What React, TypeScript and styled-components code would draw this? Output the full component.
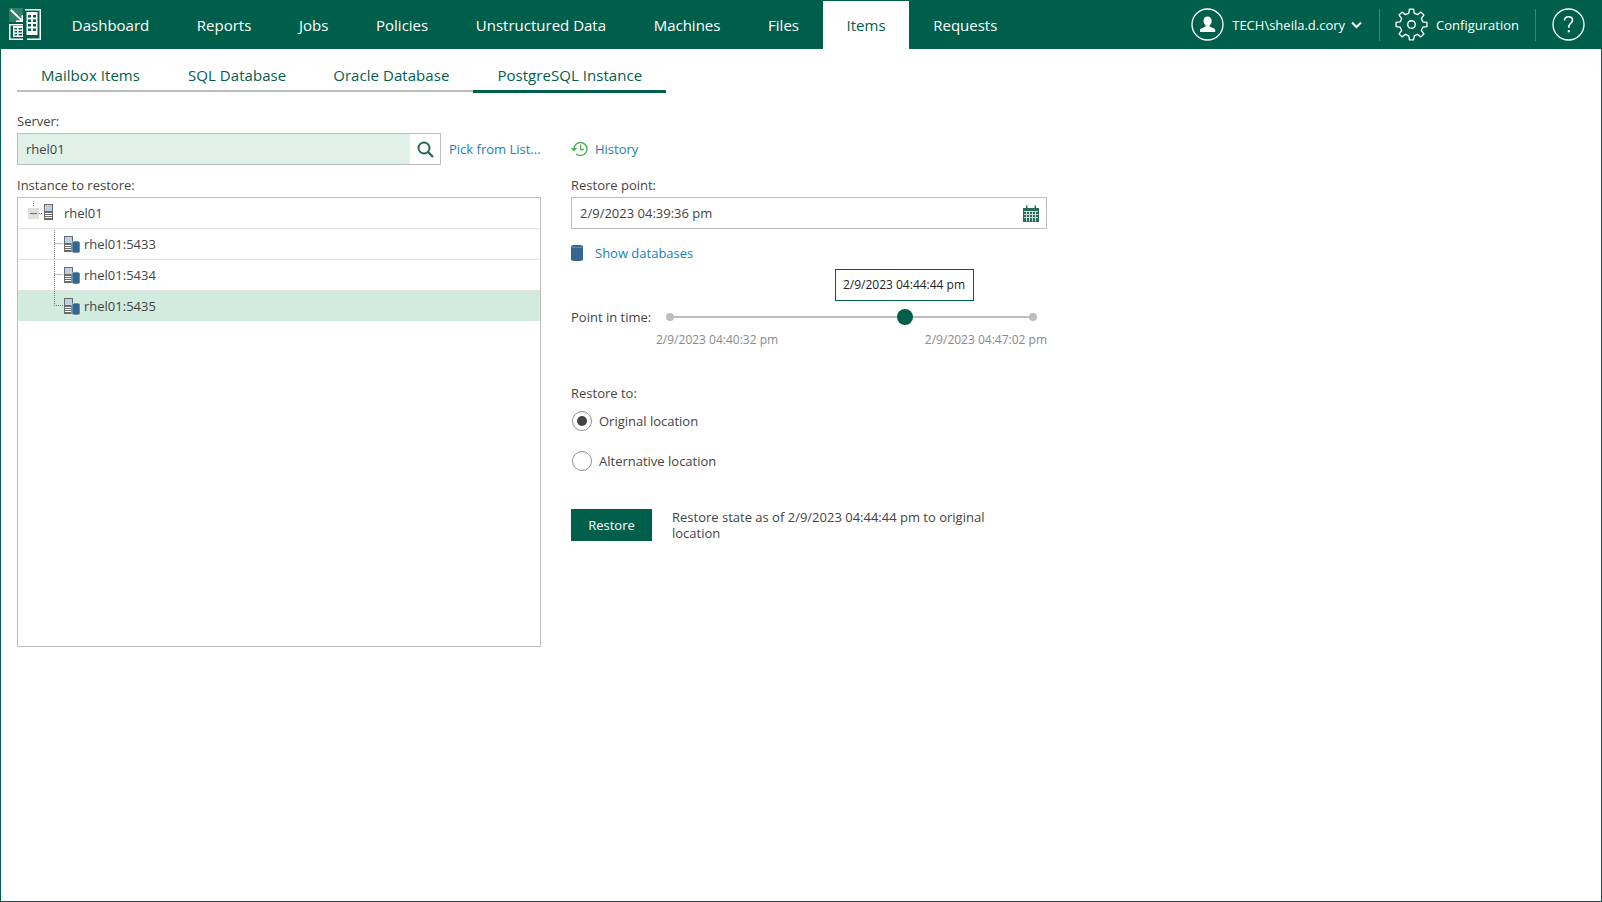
import React from "react";
import styled, { createGlobalStyle } from "styled-components";

const GREEN = "#005f4b";

const Global = createGlobalStyle`
  html, body { margin: 0; padding: 0; height: 100%; background: #fff; }
  body { font-family: "Open Sans", "Liberation Sans", sans-serif; font-size: 13px; color: #444; }
  #root { height: 100%; }
`;

const Page = styled.div`
  box-sizing: border-box;
  width: 1602px;
  height: 902px;
  border: 1px solid ${GREEN};
  border-top: 0;
  overflow: hidden;
`;
const Header = styled.header`
  height: 49px;
  margin: 0 -1px;
  background: ${GREEN};
  display: flex;
  align-items: stretch;
`;
const Logo = styled.div`
  width: 48px;
  display: flex;
  align-items: center;
  padding-left: 9px;
  box-sizing: border-box;
`;
const NavItem = styled.div<{ $active?: boolean }>`
  padding: 0 23.82px;
  display: flex;
  align-items: center;
  font-size: 15px;
  margin-top: ${(p) => (p.$active ? "1px" : "0")};
  padding-bottom: ${(p) => (p.$active ? "1px" : "0")};
  color: ${(p) => (p.$active ? GREEN : "#fff")};
  background: ${(p) => (p.$active ? "#fff" : "transparent")};
`;
const HeaderRight = styled.div`
  margin-left: auto;
  display: flex;
  align-items: center;
  color: #fff;
  padding-right: 17px;
`;
const Divider = styled.div`
  width: 1px;
  height: 32px;
  background: #3d8574;
`;
const UserBlock = styled.div`
  display: flex;
  align-items: center;
  gap: 8px;
  padding-right: 17px;
  font-size: 13px;
`;
const HeaderText = styled.span`
  padding-top: 1px;
`;
const UserChevron = styled.span`
  display: flex;
  margin-left: -2px;
`;
const ConfigBlock = styled.div`
  display: flex;
  align-items: center;
  gap: 8px;
  padding: 0 16px 0 15px;
  font-size: 13px;
`;
const HelpBlock = styled.div`
  padding-left: 16px;
  display: flex;
`;
const Tabs = styled.div`
  display: flex;
  margin: 0 0 0 16px;
  height: 43px;
  align-items: stretch;
`;
const Tab = styled.div<{ $active?: boolean; $flush?: boolean }>`
  box-sizing: border-box;
  padding: 10px 23.5px 0 24px;
  height: ${(p) => (p.$active ? "44px" : "43px")};
  display: flex;
  align-items: center;
  font-size: 15px;
  letter-spacing: 0.05px;
  color: ${GREEN};
  border-bottom: ${(p) => (p.$active ? `3px solid ${GREEN}` : "2px solid #bdbdbd")};
  margin-right: ${(p) => (p.$flush ? "-0.5px" : "0.5px")};
`;
const Content = styled.main`
  display: flex;
  padding: 20px 0 0 16px;
  gap: 30px;
`;
const LeftCol = styled.section`
  width: 524px;
`;
const RightCol = styled.section`
  width: 476px;
`;
const Label = styled.div`
  font-size: 13px;
  line-height: 18px;
  color: #444;
`;
const ServerRow = styled.div`
  display: flex;
  align-items: center;
  margin-top: 3px;
  height: 32px;
`;
const ServerInput = styled.div`
  box-sizing: border-box;
  width: 424px;
  height: 32px;
  border: 1px solid #bdbdbd;
  display: flex;
`;
const ServerValue = styled.div`
  flex: 1;
  background: #dff1e8;
  padding-left: 8px;
  line-height: 30px;
`;
const SearchAddon = styled.div`
  width: 30px;
  display: flex;
  align-items: center;
  justify-content: center;
`;
const Link = styled.span`
  color: #1a7fb5;
  font-size: 13px;
`;
const PickLink = styled(Link)`
  margin-left: 8px;
`;
const SpacedLabel = styled(Label)`
  margin-top: 11px;
  margin-bottom: 3px;
`;
const TreeBox = styled.div`
  box-sizing: border-box;
  height: 450px;
  border: 1px solid #bdbdbd;
`;
const TreeRow = styled.div<{ $selected?: boolean; $root?: boolean }>`
  height: ${(p) => (p.$selected ? "30px" : "31px")};
  box-sizing: border-box;
  display: flex;
  align-items: center;
  padding-left: ${(p) => (p.$root ? "10px" : "36px")};
  background: ${(p) => (p.$selected ? "#d1ebdf" : "#fff")};
  border-bottom: ${(p) => (p.$selected ? "0" : "1px solid #e2e2e2")};
`;
const RootName = styled.span`
  margin-left: 0;
`;
const ChildName = styled.span`
  margin-left: 0px;
`;
const HistoryRow = styled.div`
  height: 32px;
  margin-top: 21px;
  display: flex;
  align-items: center;
  gap: 7px;
`;
const DateInput = styled.div`
  box-sizing: border-box;
  height: 32px;
  margin-top: 3px;
  border: 1px solid #bdbdbd;
  display: flex;
  align-items: center;
  justify-content: space-between;
  padding: 0 7px 0 8px;
`;
const ShowDb = styled.div`
  display: flex;
  align-items: center;
  gap: 12px;
  height: 20px;
  margin-top: 14px;
`;
const SliderArea = styled.div`
  position: relative;
  margin-top: 45px;
  height: 32px;
`;
const SliderRow = styled.div`
  display: flex;
  align-items: center;
  height: 18px;
`;
const SliderLabel = styled.div`
  width: 99px;
`;
const Track = styled.div`
  position: relative;
  width: 363px;
  height: 2px;
  background: #bdbdbd;
`;
const Dot = styled.div<{ $side: "left" | "right" }>`
  position: absolute;
  top: -3px;
  ${(p) => p.$side}: -4px;
  width: 8px;
  height: 8px;
  border-radius: 50%;
  background: #bdbdbd;
`;
const Thumb = styled.div`
  position: absolute;
  top: -7px;
  left: 227px;
  width: 16px;
  height: 16px;
  border-radius: 50%;
  background: ${GREEN};
`;
const Tooltip = styled.div`
  position: absolute;
  left: 264px;
  top: -39px;
  box-sizing: border-box;
  width: 139px;
  height: 32px;
  border: 1px solid ${GREEN};
  background: #fff;
  color: #222;
  font-size: 12px;
  padding: 0 1px 1px 0;
  display: flex;
  align-items: center;
  justify-content: center;
`;
const RangeLabels = styled.div`
  display: flex;
  justify-content: space-between;
  padding-left: 85px;
  margin-top: 5px;
  font-size: 12px;
  line-height: 18px;
  color: #8a8a8a;
`;
const RestoreToLabel = styled(Label)`
  margin-top: 44px;
`;
const RadioRow = styled.div`
  display: flex;
  align-items: center;
  gap: 7px;
  height: 22px;
  margin-bottom: 18px;
  padding-left: 1px;
`;
const RadioList = styled.div`
  margin-top: 8px;
`;
const Radio = styled.div<{ $checked?: boolean }>`
  box-sizing: border-box;
  width: 20px;
  height: 20px;
  border-radius: 50%;
  border: 1px solid #8f8f8f;
  display: flex;
  align-items: center;
  justify-content: center;
  &::after {
    content: "";
    display: ${(p) => (p.$checked ? "block" : "none")};
    width: 10px;
    height: 10px;
    border-radius: 50%;
    background: #444;
  }
`;
const ActionRow = styled.div`
  display: flex;
  align-items: center;
  margin-top: 37px;
`;
const RestoreButton = styled.button`
  width: 81px;
  height: 32px;
  border: 0;
  padding: 0;
  background: ${GREEN};
  color: #fff;
  font: 13px "Open Sans", "Liberation Sans", sans-serif;
`;
const ActionText = styled.div`
  margin-left: 20px;
  width: 330px;
  line-height: 16px;
`;

const LogoIcon = () => (
  <svg width="33" height="33" viewBox="0 0 33 33">
    <path d="M0 0h14v14H0z" fill="#2f7f6c" />
    <path d="M1 2.500 2.500 1 12.500 11V7H14v7H7v-1.500h4.500L1 2.500z" fill="#fff" />
    <path d="M16 1h16v31H18v-1.500h12.500V2.500H16z" fill="#fff" />
    <path d="M17.500 4h11v23h-11z" fill="#fff" />
    <path d="M19 7h3v2.500h-3zM24 7h3v2.500h-3zM19 11.500h3V14h-3zM24 11.500h3V14h-3zM19 16h3v2.500h-3zM24 16h3v2.500h-3zM19 20.500h3V23h-3zM24 20.500h3V23h-3z" fill={GREEN} />
    <path d="M0 16h14v1.500H1.500v13H14V32H0z" fill="#fff" />
    <path d="M4 18h10v11H4z" fill="#fff" />
    <path d="M5.500 20h2.500v1.500H5.500zM9.500 20H13v1.500H9.500zM5.500 23h2.500v1.500H5.500zM9.500 23H13v1.500H9.500zM5.500 26h2.500v1.500H5.500zM9.500 26H13v1.500H9.500z" fill={GREEN} />
  </svg>
);

const UserIcon = () => (
  <svg width="33" height="33" viewBox="0 0 33 33">
    <circle cx="16.500" cy="16.500" r="15.500" fill="none" stroke="#fff" strokeWidth="1.300" />
    <path d="M16.500 8.500c2.700 0 4.200 2 4.200 4.500 0 2-1 3.500-2 4.300v1.500c2.500.8 5.500 1.800 5.500 3.400v1.800H9v-1.800c0-1.600 3-2.600 5.500-3.400v-1.500c-1-.8-2-2.300-2-4.300 0-2.500 1.300-4.500 4-4.500z" fill="#fff" />
  </svg>
);
const Chevron = () => (
  <svg width="11" height="8" viewBox="0 0 11 8">
    <path d="M1 1.500 5.500 6 10 1.500" fill="none" stroke="#fff" strokeWidth="2" />
  </svg>
);

// Eight blocky, chamfered teeth around the centre.
const gearPath = (() => {
  const pts: string[] = [];
  const c = 16.5;
  const rOut = 15.6;
  const rIn = 11.6;
  const teeth = 8;
  for (let i = 0; i < teeth; i++) {
    const a = (i * 2 * Math.PI) / teeth - Math.PI / 2;
    const step = (2 * Math.PI) / teeth;
    const stops: [number, number][] = [
      [rIn, a - step * 0.3],
      [rOut, a - step * 0.17],
      [rOut, a + step * 0.17],
      [rIn, a + step * 0.3],
    ];
    for (const [r, t] of stops) {
      pts.push(`${(c + r * Math.cos(t)).toFixed(2)} ${(c + r * Math.sin(t)).toFixed(2)}`);
    }
  }
  return `M${pts.join("L")}Z`;
})();

const GearIcon = () => (
  <svg width="33" height="33" viewBox="0 0 33 33">
    <path d={gearPath} fill="none" stroke="#fff" strokeWidth="1.300" strokeLinejoin="round" />
    <circle cx="16.500" cy="16.500" r="3.800" fill="none" stroke="#fff" strokeWidth="1.400" />
  </svg>
);
const HelpIcon = () => (
  <svg width="33" height="33" viewBox="0 0 33 33">
    <circle cx="16.500" cy="16.500" r="15.500" fill="none" stroke="#fff" strokeWidth="1.300" />
    <path d="M12.500 12.500c0-2.500 1.800-3.700 4-3.700s4 1.300 4 3.400c0 3.200-3.700 3.300-3.700 6.500v1" fill="none" stroke="#fff" strokeWidth="1.600" />
    <rect x="15.800" y="22" width="2" height="2.300" fill="#fff" />
  </svg>
);
const SearchIcon = () => (
  <svg width="17" height="17" viewBox="0 0 17 17">
    <circle cx="7" cy="7" r="5.500" fill="none" stroke="#2a6b58" strokeWidth="2" />
    <path d="M11 11l5 5" stroke="#2a6b58" strokeWidth="2.400" />
  </svg>
);
const HistoryIcon = () => (
  <svg width="17" height="16" viewBox="0 0 17 16">
    <path d="M3 8a6.500 6.500 0 1 1 2.200 4.900" fill="none" stroke="#4cb050" strokeWidth="1.400" />
    <path d="M0 7h6L3 10.500z" fill="#4cb050" />
    <path d="M9.500 3.500v5H13" fill="none" stroke="#4cb050" strokeWidth="1.400" />
  </svg>
);
const CalendarIcon = () => (
  <svg width="16" height="17" viewBox="0 0 16 17">
    <path d="M0 3h16v14H0z" fill="#2a6b58" />
    <path d="M3 0.500h1.500V4H3zM11.500 0.500H13V4h-1.500z" fill="#2a6b58" />
    <path d="M1 6.500h14M1 9.500h14M1 12.500h14M3.500 6v10.500M6.500 6v10.500M9.500 6v10.500M12.500 6v10.500" stroke="#d8e8e2" strokeWidth="0.900" />
  </svg>
);
const DbIcon = () => (
  <svg width="12" height="16" viewBox="0 0 12 16">
    <path d="M0 1.200C0 .4 2.500 0 6 0s6 .4 6 1.200v13.600c0 .8-2.500 1.200-6 1.200s-6-.4-6-1.200z" fill="#336792" />
    <path d="M0.500 2c1 .4 3 .6 5.500.6s4.500-.2 5.500-.6" fill="none" stroke="#8fb0cc" strokeWidth="0.600" />
  </svg>
);
const RootTreeIcon = () => (
  <svg width="36" height="24" viewBox="0 0 36 24">
    <rect x="0" y="7" width="11" height="11" fill="#e0e0e0" />
    <path d="M2 12.500h7" stroke="#777" strokeWidth="1.200" />
    <path d="M5.500 0v6M11 12.500h4" stroke="#777" strokeWidth="1" strokeDasharray="1 1" />
    <rect x="16" y="3" width="9" height="16" fill="#6b6b6b" />
    <rect x="17" y="4" width="7" height="6" fill="#b8d0ea" />
    <path d="M17 12.500h7M17 14.500h7M17 16.500h7" stroke="#fff" strokeWidth="1" />
  </svg>
);
const InstanceIcon = ({ last }: { last?: boolean }) => (
  <svg width="30" height="30" viewBox="0 0 30 30">
    <path d={last ? "M0.500 0v14.500H9" : "M0.500 1v29M0.500 14.500H9"} stroke="#777" strokeWidth="1" strokeDasharray="1 1" fill="none" />
    <rect x="10" y="7" width="9" height="16" fill="#6b6b6b" />
    <rect x="11" y="8" width="7" height="6" fill="#b8d0ea" />
    <path d="M11 16.500h6M11 18.500h6M11 20.500h6" stroke="#fff" strokeWidth="1" />
    <path d="M18 13.500c0-1 1.200-1.500 4-1.500s4 .5 4 1.500v9c0 1-1.200 1.500-4 1.500s-4-.5-4-1.500z" fill="#336792" stroke="#fff" strokeWidth="0.500" />
  </svg>
);

const navItems = ["Dashboard", "Reports", "Jobs", "Policies", "Unstructured Data", "Machines", "Files", "Items", "Requests"];
const instances = ["rhel01:5433", "rhel01:5434", "rhel01:5435"];

export default function App() {
  return (
    <Page>
      <Global />
      <Header>
        <Logo><LogoIcon /></Logo>
        {navItems.map((n) => (
          <NavItem key={n} $active={n === "Items"}>{n}</NavItem>
        ))}
        <HeaderRight>
          <UserBlock>
            <UserIcon />
            <HeaderText>TECH\sheila.d.cory</HeaderText>
            <UserChevron><Chevron /></UserChevron>
          </UserBlock>
          <Divider />
          <ConfigBlock>
            <GearIcon />
            <HeaderText>Configuration</HeaderText>
          </ConfigBlock>
          <Divider />
          <HelpBlock><HelpIcon /></HelpBlock>
        </HeaderRight>
      </Header>
      <Tabs>
        <Tab>Mailbox Items</Tab>
        <Tab $flush>SQL Database</Tab>
        <Tab>Oracle Database</Tab>
        <Tab $active>PostgreSQL Instance</Tab>
      </Tabs>
      <Content>
        <LeftCol>
          <Label>Server:</Label>
          <ServerRow>
            <ServerInput>
              <ServerValue>rhel01</ServerValue>
              <SearchAddon><SearchIcon /></SearchAddon>
            </ServerInput>
            <PickLink>Pick from List...</PickLink>
          </ServerRow>
          <SpacedLabel>Instance to restore:</SpacedLabel>
          <TreeBox>
            <TreeRow $root>
              <RootTreeIcon />
              <RootName>rhel01</RootName>
            </TreeRow>
            {instances.map((i, idx) => (
              <TreeRow key={i} $selected={idx === 2}>
                <InstanceIcon last={idx === 2} />
                <ChildName>{i}</ChildName>
              </TreeRow>
            ))}
          </TreeBox>
        </LeftCol>
        <RightCol>
          <HistoryRow>
            <HistoryIcon />
            <Link>History</Link>
          </HistoryRow>
          <SpacedLabel>Restore point:</SpacedLabel>
          <DateInput>
            <span>2/9/2023 04:39:36 pm</span>
            <CalendarIcon />
          </DateInput>
          <ShowDb>
            <DbIcon />
            <Link>Show databases</Link>
          </ShowDb>
          <SliderArea>
            <Tooltip>2/9/2023 04:44:44 pm</Tooltip>
            <SliderRow>
              <SliderLabel>Point in time:</SliderLabel>
              <Track>
                <Dot $side="left" />
                <Thumb />
                <Dot $side="right" />
              </Track>
            </SliderRow>
            <RangeLabels>
              <span>2/9/2023 04:40:32 pm</span>
              <span>2/9/2023 04:47:02 pm</span>
            </RangeLabels>
          </SliderArea>
          <RestoreToLabel>Restore to:</RestoreToLabel>
          <RadioList>
            <RadioRow>
              <Radio $checked />
              <span>Original location</span>
            </RadioRow>
            <RadioRow>
              <Radio />
              <span>Alternative location</span>
            </RadioRow>
          </RadioList>
          <ActionRow>
            <RestoreButton>Restore</RestoreButton>
            <ActionText>Restore state as of 2/9/2023 04:44:44 pm to original location</ActionText>
          </ActionRow>
        </RightCol>
      </Content>
    </Page>
  );
}
